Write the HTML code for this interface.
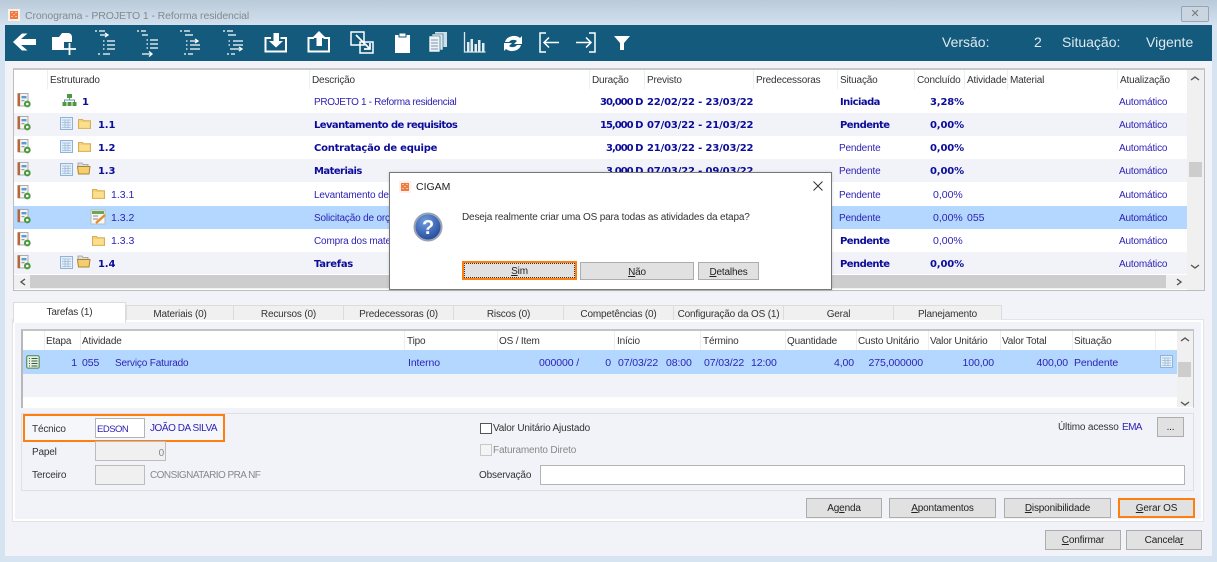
<!DOCTYPE html>
<html lang="pt-BR">
<head>
<meta charset="utf-8">
<title>Cronograma</title>
<style>
html,body{margin:0;padding:0;width:1217px;height:562px;overflow:hidden;background:#d6e4f2}
*{box-sizing:border-box}
body{font-family:"Liberation Sans",sans-serif;font-size:10px;letter-spacing:-.17px;color:#222;position:relative}
div{position:absolute}
.t{position:absolute;white-space:nowrap;line-height:14px;height:14px;margin-top:2px}
.h{color:#333;top:72px}
.s{position:absolute;width:1px;background:#eceef2}
.b{color:#0c0c9a;font-family:"DejaVu Sans",sans-serif;font-weight:bold;font-size:10px;letter-spacing:-.15px;margin-top:2px}
.lw{letter-spacing:-.55px}
.dur{letter-spacing:-1px}
.n{color:#2b1fb4}
.w{font-size:10.5px;letter-spacing:0;margin-top:1px}
.r{text-align:right}
.row{left:14px;width:1173px;height:23.2px}
.alt{background:#f1f3f9}
.sel{background:#b3d7ff}
.tab{top:305px;height:15px;background:#f0f0f0;border:1px solid #dcdcdc;border-bottom:0;text-align:center;line-height:17px;color:#333;white-space:nowrap}
.btn{background:#e1e1e1;border:1px solid #adadad;text-align:center;line-height:20px;color:#222;white-space:nowrap}
.inp{border:1px solid #b4b4b4;background:#fff}
.dis{background:#f0f0f0;border-color:#bcbcbc}
.lh{color:#333;top:333px}
.sm{top:355px;color:#2b1fb4;font-size:10.5px;letter-spacing:-.1px;margin-top:1px}
.hd{margin:0;font-size:14px;letter-spacing:0;color:#dfe9ef;height:16px;line-height:16px;top:34px}
svg{position:absolute;overflow:visible}
</style>
</head>
<body>
<svg width="0" height="0" style="position:absolute">
<defs>
<symbol id="book" viewBox="0 0 14 15"><rect x="1" y="0.5" width="10" height="12.5" fill="#f4f4f4" stroke="#9a9a9a" stroke-width=".8"/><rect x="0.5" y="0.5" width="2.6" height="12.5" fill="#b5673c"/><rect x="4.5" y="3" width="5" height="2.4" fill="#5b9bd5"/><rect x="4.5" y="7" width="3" height="1.2" fill="#9a9a9a"/><circle cx="10.3" cy="11" r="3.4" fill="#4d9a3e"/><circle cx="10.3" cy="11" r="1.3" fill="#fff"/></symbol>
<symbol id="tbl" viewBox="0 0 13 13"><rect x=".5" y=".5" width="12" height="12" fill="#e4eefa" stroke="#8fb2d8"/><path d="M2 3h9M2 5.500h9M2 8h9M2 10.500h9M5 3v8M8 3v8" stroke="#9dbad8" stroke-width=".8" fill="none"/></symbol>
<symbol id="fc" viewBox="0 0 13 11"><path d="M.5 1.500h4l1 1.200h7v8h-12z" fill="#f5d27a" stroke="#d9ad55"/><rect x="1.500" y="4" width="10" height="5.500" fill="#fbdf8e"/></symbol>
<symbol id="fo" viewBox="0 0 14 13"><path d="M1 1h4l1 1.400h5V6H1z" fill="#dcdcdc" stroke="#9a9a9a" stroke-width=".8"/><path d="M.5 4.500h12.500l-1 7.500H1.500z" fill="#f5cf6f" stroke="#a98630"/></symbol>
<symbol id="logo" viewBox="0 0 12 12"><rect width="12" height="12" fill="#fdf1ea"/><rect x="2" y="2" width="8" height="8" fill="#f07a40"/><path d="M3.500 3.500h1M7.500 3.500h1M5.500 5.500h1M3.500 7.500h1M7.500 7.500h1" stroke="#fff"/></symbol>
</defs>
</svg>

<!-- window chrome -->
<div style="left:0;top:0;width:1217px;height:25px;background:linear-gradient(#b9cad8,#d3e1ef)"></div>
<svg style="left:8px;top:9px" width="12" height="12"><use href="#logo" width="12" height="12"/></svg>
<span class="t" style="left:25px;top:8px;font-size:10.5px;letter-spacing:-.1px;color:#85898e;margin-top:1px">Cronograma - PROJETO 1 - Reforma residencial</span>
<div style="left:1181px;top:6px;width:28px;height:16px;background:#c9d5e0;border:1px solid #98a4af;border-radius:2px;color:#777;text-align:center;line-height:14px;font-size:11px">✕</div>

<div style="left:5px;top:25px;width:1207px;height:36px;background:#135a7c"></div>
<div style="left:5px;top:61px;width:1207px;height:495px;background:#f1f3f9"></div>

<!-- toolbar icons -->
<svg style="left:0;top:25px" width="640" height="36" viewBox="0 0 640 36">
<path d="M13 17 L22 8.500 H27.500 L21 14 H36 V20 H21 L27.500 25.500 H22Z" fill="#fff"/>
<path d="M52 12H59L62 8H68a4 4 0 0 1 4 4V17H64V25H52Z" fill="#fff"/>
<path d="M63.500 24H76M69.500 18V30" stroke="#fff" stroke-width="1.800" fill="none"/>
<g fill="none" stroke="#fff" stroke-width="1.300">
<path d="M95 6h2M99 6h6"/><path d="M100 10h7m-2-2 3 2-3 2"/><path d="M107 16h8M107 20h8M107 24h8M103 16h1.500M103 20h1.500M103 24h1.500M98 29h2M103 29h7"/>
<path d="M137 6h2M141 6h5M142 10h6M150 15h8M150 19h8M150 23h8M146.500 15h1.500M146.500 19h1.500M146.500 23h1.500"/><path d="M142 29h9m-2-2.500 3 2.500-3 2.500"/>
<path d="M180 6h2M184 6h6M185 10h8"/><path d="M190 16h7m-2-2 3 2-3 2"/><path d="M190 20h10M190 24h10M186 16h1.500M186 20h1.500M186 24h1.500M184 29h2M188 29h5"/>
<path d="M223 6h2M227 6h6M228 10h8M233 16h10M233 20h10M228.500 16h1.500M228.500 20h1.500"/><path d="M230 24h11m-2-2 3 2-3 2"/><path d="M227 29h2M231 29h4"/>
</g>
<path d="M271 13h-5.500v13.500h20.500V13h-5.500" fill="none" stroke="#fff" stroke-width="2"/><path d="M273.500 8h5.500v8h4l-7 6.500-7-6.500h4.500z" fill="#fff"/>
<path d="M314 13h-5.500v13.500h20.500V13h-5.500" fill="none" stroke="#fff" stroke-width="2"/><path d="M316.500 21h5.500v-8h4l-7-7-7 7h4.500z" fill="#fff"/>
<path d="M351 7h13v13h-13zM360 17h13v11h-13z" fill="none" stroke="#fff" stroke-width="1.500"/><path d="M356 10l14 14m0-6v6h-6" fill="none" stroke="#fff" stroke-width="1.700"/>
<path d="M395 10h15v18h-15z" fill="#fff"/><rect x="399" y="8" width="7" height="4" fill="#fff" stroke="#135a7c"/>
<g transform="translate(0,-4)"><path d="M435 11h12v15h-12z" fill="#cfdde6"/><path d="M432 13h11v16h-11z" fill="#dfe8ee" stroke="#135a7c" stroke-width=".6"/><path d="M429 15h11v16h-11z" fill="#eef3f6" stroke="#135a7c" stroke-width=".6"/><path d="M431 19h7M431 22h7M431 25h7M431 28h7" stroke="#7b97a8"/></g>
<path d="M464.500 7v20h21" fill="none" stroke="#dfe8ee" stroke-width="1.300"/><path d="M467 17h2.500v10H467zM470.500 14h2.500v13h-2.500zM474.500 19h2.500v8h-2.500zM478 15h2.500v12H478zM482 18h2.500v9H482z" fill="#e4ecf1"/>
<g transform="translate(0,1)"><path d="M505 16a9 7.500 0 0 1 15-4l2-2v8h-8l3-3a5 4 0 0 0-8 1zM521 19a9 7.500 0 0 1-15 4l-2 2v-8h8l-3 3a5 4 0 0 0 8-1z" fill="#fff"/></g>
<path d="M546 8h-6v19h6M559 17.500h-15m5-5-5 5 5 5" fill="none" stroke="#fff" stroke-width="1.500"/>
<path d="M589 8h6v19h-6M576 17.500h15m-5-5 5 5-5 5" fill="none" stroke="#fff" stroke-width="1.500"/>
<path d="M614 11h16l-6 7v7h-4v-7z" fill="#fff"/>
</svg>
<span class="t hd" style="left:942px">Versão:</span>
<span class="t hd" style="left:1034px">2</span>
<span class="t hd" style="left:1062px">Situação:</span>
<span class="t hd" style="left:1146px">Vigente</span>

<!-- upper grid -->
<div style="left:13px;top:68px;width:1192px;height:223px;background:#fff;border:1px solid #bdbdbd;border-top:2px solid #c8c8c8"></div>
<div class="row alt" style="top:112.500px"></div>
<div class="row alt" style="top:159px"></div>
<div class="row sel" style="top:205.500px"></div>
<div class="row alt" style="top:252px;height:22px"></div>
<div class="s" style="left:47px;top:70px;height:19px"></div><div class="s" style="left:309px;top:70px;height:19px"></div><div class="s" style="left:589px;top:70px;height:19px"></div><div class="s" style="left:644px;top:70px;height:19px"></div><div class="s" style="left:753px;top:70px;height:19px"></div><div class="s" style="left:837px;top:70px;height:19px"></div><div class="s" style="left:914px;top:70px;height:19px"></div><div class="s" style="left:964px;top:70px;height:19px"></div><div class="s" style="left:1007px;top:70px;height:19px"></div><div class="s" style="left:1117px;top:70px;height:19px"></div>
<span class="t h" style="left:50px">Estruturado</span><span class="t h" style="left:312px">Descrição</span><span class="t h" style="left:592px">Duração</span><span class="t h" style="left:647px">Previsto</span><span class="t h" style="left:756px">Predecessoras</span><span class="t h" style="left:840px">Situação</span><span class="t h" style="left:917px">Concluído</span><span class="t h" style="left:967px">Atividade</span><span class="t h" style="left:1010px">Material</span><span class="t h" style="left:1120px">Atualização</span>

<svg style="left:0;top:0" width="120" height="290">
<use href="#book" x="17" y="93" width="14" height="15"/><use href="#book" x="17" y="116" width="14" height="15"/><use href="#book" x="17" y="139" width="14" height="15"/><use href="#book" x="17" y="162" width="14" height="15"/><use href="#book" x="17" y="185" width="14" height="15"/><use href="#book" x="17" y="209" width="14" height="15"/><use href="#book" x="17" y="232" width="14" height="15"/><use href="#book" x="17" y="255" width="14" height="15"/>
<path d="M67 94h5v4h-5zM62.500 102h4v4h-4zM67.500 102h4v4h-4zM72.500 102h4v4h-4z" fill="#4d9a3e"/><path d="M69.500 98v2M64.500 102v-2h10v2" stroke="#6a8fb0" fill="none"/>
<use href="#tbl" x="60" y="117" width="13" height="13"/><use href="#fc" x="78" y="118" width="13" height="11"/>
<use href="#tbl" x="60" y="140" width="13" height="13"/><use href="#fc" x="78" y="141" width="13" height="11"/>
<use href="#tbl" x="60" y="163" width="13" height="13"/><use href="#fo" x="77" y="162" width="14" height="13"/>
<use href="#fc" x="92" y="188" width="13" height="11"/>
<rect x="91" y="210" width="14" height="14" fill="#f7f7f7" stroke="#bbb"/><rect x="92" y="211" width="12" height="3" fill="#6aa84f"/><path d="M93 216h5M93 219h5" stroke="#888"/><path d="M96 223l9-8" stroke="#e08a28" stroke-width="2.200"/>
<use href="#fc" x="92" y="235" width="13" height="11"/>
<use href="#tbl" x="60" y="256" width="13" height="13"/><use href="#fo" x="77" y="255" width="14" height="13"/>
</svg>

<!-- row 1 -->
<span class="t b" style="left:82px;top:94px">1</span>
<span class="t n" style="left:314px;top:94px;letter-spacing:-.35px">PROJETO 1 - Reforma residencial</span>
<span class="t b dur" style="left:600px;top:94px">30,000 D</span><span class="t b" style="left:647px;top:94px">22/02/22 - 23/03/22</span>
<span class="t b lw" style="left:840px;top:94px">Iniciada</span><span class="t b" style="left:930px;top:94px">3,28%</span><span class="t n" style="left:1119px;top:94px">Automático</span>
<!-- row 2 -->
<span class="t b" style="left:98px;top:117px">1.1</span>
<span class="t b" style="left:314px;top:117px;letter-spacing:-.58px">Levantamento de requisitos</span>
<span class="t b dur" style="left:600px;top:117px">15,000 D</span><span class="t b" style="left:647px;top:117px">07/03/22 - 21/03/22</span>
<span class="t b lw" style="left:840px;top:117px">Pendente</span><span class="t b" style="left:930px;top:117px">0,00%</span><span class="t n" style="left:1119px;top:117px">Automático</span>
<!-- row 3 -->
<span class="t b" style="left:98px;top:140px">1.2</span>
<span class="t b" style="left:314px;top:140px;letter-spacing:-.24px">Contratação de equipe</span>
<span class="t b dur" style="left:606px;top:140px">3,000 D</span><span class="t b" style="left:647px;top:140px">21/03/22 - 23/03/22</span>
<span class="t n" style="left:839px;top:140px">Pendente</span><span class="t b" style="left:930px;top:140px">0,00%</span><span class="t n" style="left:1119px;top:140px">Automático</span>
<!-- row 4 -->
<span class="t b" style="left:98px;top:163px">1.3</span>
<span class="t b lw" style="left:314px;top:163px">Materiais</span>
<span class="t b dur" style="left:606px;top:163px">3,000 D</span><span class="t b" style="left:647px;top:163px">07/03/22 - 09/03/22</span>
<span class="t n" style="left:839px;top:163px">Pendente</span><span class="t b" style="left:930px;top:163px">0,00%</span><span class="t n" style="left:1119px;top:163px">Automático</span>
<!-- row 5 -->
<span class="t n w" style="left:111px;top:187px">1.3.1</span>
<span class="t n" style="left:314px;top:187px">Levantamento de</span>
<span class="t n" style="left:839px;top:187px">Pendente</span><span class="t n w" style="left:933px;top:187px">0,00%</span><span class="t n" style="left:1119px;top:187px">Automático</span>
<!-- row 6 -->
<span class="t n w" style="left:111px;top:210px">1.3.2</span>
<span class="t n" style="left:314px;top:210px">Solicitação de orç</span>
<span class="t n" style="left:839px;top:210px">Pendente</span><span class="t n w" style="left:933px;top:210px">0,00%</span><span class="t n w" style="left:967px;top:210px">055</span><span class="t n" style="left:1119px;top:210px">Automático</span>
<!-- row 7 -->
<span class="t n w" style="left:111px;top:233px">1.3.3</span>
<span class="t n" style="left:314px;top:233px">Compra dos mate</span>
<span class="t b lw" style="left:840px;top:233px">Pendente</span><span class="t n w" style="left:933px;top:233px">0,00%</span><span class="t n" style="left:1119px;top:233px">Automático</span>
<!-- row 8 -->
<span class="t b" style="left:98px;top:256px">1.4</span>
<span class="t b" style="left:314px;top:256px;letter-spacing:-.3px">Tarefas</span>
<span class="t b lw" style="left:840px;top:256px">Pendente</span><span class="t b" style="left:930px;top:256px">0,00%</span><span class="t n" style="left:1119px;top:256px">Automático</span>

<!-- upper scrollbars -->
<div style="left:1187px;top:70px;width:17px;height:220px;background:#f0f0f0"></div>
<div style="left:1189px;top:162px;width:13px;height:15px;background:#cdcdcd"></div>
<div style="left:14px;top:275px;width:1173px;height:14px;background:#f0f0f0"></div>
<div style="left:30px;top:275px;width:1136px;height:13px;background:#cdcdcd"></div>
<svg style="left:0;top:0" width="1217" height="300">
<path d="M1191 80l4-3 4 3M1191 265l4 3 4-3M25 279l-4 3 4 3M1177 279l4 3-4 3" fill="none" stroke="#555" stroke-width="1.400"/>
</svg>

<!-- tabs -->
<div style="left:13px;top:320px;width:1190px;height:201px;background:#f1f3f9;border:2px solid #fff;box-shadow:0 0 0 1px #e4e4e8"></div>
<div class="tab" style="left:126px;width:108px">Materiais (0)</div>
<div class="tab" style="left:233px;width:111px">Recursos (0)</div>
<div class="tab" style="left:343px;width:111px">Predecessoras (0)</div>
<div class="tab" style="left:453px;width:111px">Riscos (0)</div>
<div class="tab" style="left:563px;width:111px">Competências (0)</div>
<div class="tab" style="left:673px;width:111px">Configuração da OS (1)</div>
<div class="tab" style="left:783px;width:111px">Geral</div>
<div class="tab" style="left:893px;width:109px">Planejamento</div>
<div style="left:13px;top:302px;width:113px;height:21px;background:#fff;border:1px solid #dcdcdc;border-bottom:0;text-align:center;line-height:19px;color:#333">Tarefas (1)</div>

<!-- lower grid -->
<div style="left:21px;top:329px;width:1173px;height:79px;background:#fff;border-left:2px solid #b8b8b8;border-top:2px solid #c4c4c4;border-right:1px solid #c4c4c4"></div>
<div style="left:23px;top:350px;width:1154px;height:23.500px;background:#b3d7ff"></div>
<div style="left:23px;top:373.500px;width:1154px;height:23px;background:#f1f3f9"></div>
<div class="s" style="left:44px;top:331px;height:19px"></div><div class="s" style="left:80px;top:331px;height:19px"></div><div class="s" style="left:404px;top:331px;height:19px"></div><div class="s" style="left:497px;top:331px;height:19px"></div><div class="s" style="left:614px;top:331px;height:19px"></div><div class="s" style="left:700px;top:331px;height:19px"></div><div class="s" style="left:785px;top:331px;height:19px"></div><div class="s" style="left:856px;top:331px;height:19px"></div><div class="s" style="left:928px;top:331px;height:19px"></div><div class="s" style="left:1000px;top:331px;height:19px"></div><div class="s" style="left:1072px;top:331px;height:19px"></div><div class="s" style="left:1155px;top:331px;height:19px"></div>
<span class="t lh" style="left:46px">Etapa</span><span class="t lh" style="left:82px">Atividade</span><span class="t lh" style="left:407px">Tipo</span><span class="t lh" style="left:499px">OS / Item</span><span class="t lh" style="left:617px">Início</span><span class="t lh" style="left:703px">Término</span><span class="t lh" style="left:787px">Quantidade</span><span class="t lh" style="left:858px">Custo Unitário</span><span class="t lh" style="left:930px">Valor Unitário</span><span class="t lh" style="left:1002px">Valor Total</span><span class="t lh" style="left:1074px">Situação</span>
<svg style="left:26px;top:355px" width="14" height="14"><rect x=".7" y=".7" width="12.500" height="12.500" rx="1.500" fill="#e6f0e4" stroke="#5d8f63" stroke-width="1.200"/><path d="M3 3.500h1M5.500 3.500h6M3 6h1M5.500 6h6M3 8.500h1M5.500 8.500h6M3 11h1M5.500 11h6" stroke="#35603c"/></svg>
<span class="t sm r" style="left:60px;width:17px">1</span><span class="t sm" style="left:82px">055</span><span class="t sm" style="left:115px;font-size:10px;letter-spacing:-.17px;margin-top:2px">Serviço Faturado</span><span class="t sm" style="left:408px">Interno</span><span class="t sm" style="left:539px">000000 /</span><span class="t sm r" style="left:600px;width:11px">0</span><span class="t sm" style="left:618px">07/03/22</span><span class="t sm" style="left:666px">08:00</span><span class="t sm" style="left:704px">07/03/22</span><span class="t sm" style="left:751px">12:00</span><span class="t sm r" style="left:820px;width:34px">4,00</span><span class="t sm r" style="left:860px;width:63px">275,000000</span><span class="t sm r" style="left:950px;width:44px">100,00</span><span class="t sm r" style="left:1020px;width:48px">400,00</span><span class="t sm" style="left:1074px">Pendente</span>
<svg style="left:1160px;top:355px" width="13" height="13"><use href="#tbl" width="13" height="13"/></svg>
<div style="left:1177px;top:331px;width:16px;height:76px;background:#f0f0f0"></div>
<div style="left:1178px;top:362px;width:13px;height:15px;background:#cdcdcd"></div>
<svg style="left:0;top:0" width="1217" height="420"><path d="M1181 341l4-3 4 3M1181 402l4 3 4-3" fill="none" stroke="#555" stroke-width="1.400"/></svg>

<!-- fields -->
<div style="left:21px;top:413px;width:1173px;height:78px;border:1px solid #e0e0e4"></div>
<div style="left:23px;top:414px;width:202px;height:28px;border:2px solid #ff7f0e;background:#f6f7fb"></div>
<span class="t" style="left:32px;top:421px;color:#333">Técnico</span>
<div class="inp" style="left:95px;top:418px;width:50px;height:20px"></div>
<span class="t n" style="left:97px;top:421px;font-size:9.5px;letter-spacing:-.5px">EDSON</span>
<span class="t n" style="left:150px;top:420px;letter-spacing:-.45px">JOÃO DA SILVA</span>
<span class="t" style="left:32px;top:444px;color:#333">Papel</span>
<div class="inp dis" style="left:95px;top:441px;width:71px;height:20px"></div>
<span class="t r" style="left:150px;top:445px;width:14px;color:#888">0</span>
<span class="t" style="left:32px;top:467px;color:#333">Terceiro</span>
<div class="inp dis" style="left:95px;top:465px;width:50px;height:20px"></div>
<span class="t" style="left:150px;top:467px;color:#888;letter-spacing:-.55px">CONSIGNATARIO PRA NF</span>

<div style="left:480px;top:423px;width:12px;height:11px;background:#fff;border:1px solid #555"></div>
<span class="t" style="left:493px;top:420px;color:#333">Valor Unitário Ajustado</span>
<div style="left:480px;top:444px;width:12px;height:12px;background:#f4f4f4;border:1px solid #c8c8c8"></div>
<span class="t" style="left:493px;top:442px;color:#888">Faturamento Direto</span>
<span class="t" style="left:479px;top:467px;color:#333">Observação</span>
<div class="inp" style="left:540px;top:465px;width:645px;height:20px"></div>
<span class="t" style="left:1058px;top:419px;color:#333">Último acesso</span>
<span class="t n" style="left:1122px;top:419px;letter-spacing:-.6px">EMA</span>
<div class="btn" style="left:1157px;top:417px;width:27px;height:20px;line-height:20px">...</div>

<!-- buttons -->
<div class="btn" style="left:806px;top:498px;width:76px;height:20px"><span>Ag<u>e</u>nda</span></div>
<div class="btn" style="left:889px;top:498px;width:107px;height:20px"><u>A</u>pontamentos</div>
<div class="btn" style="left:1004px;top:498px;width:107px;height:20px"><u>D</u>isponibilidade</div>
<div class="btn" style="left:1118px;top:498px;width:77px;height:20px;border:2px solid #ff7f0e;line-height:18px"><u>G</u>erar OS</div>
<div class="btn" style="left:1045px;top:530px;width:76px;height:20px"><u>C</u>onfirmar</div>
<div class="btn" style="left:1126px;top:530px;width:76px;height:20px">Cancela<u>r</u></div>

<!-- dialog -->
<div style="left:389px;top:172px;width:443px;height:118px;background:#fff;border:1px solid #777;box-shadow:0 0 3px rgba(0,0,0,.15)"></div>
<svg style="left:399px;top:181px" width="12" height="12"><use href="#logo" width="12" height="12"/></svg>
<span class="t" style="left:416px;top:179px;font-size:10.5px;letter-spacing:0;color:#222;margin-top:1px">CIGAM</span>
<svg style="left:812px;top:180px" width="12" height="12"><path d="M1.500 1.500l9 9M10.500 1.500l-9 9" stroke="#333" stroke-width="1"/></svg>
<svg style="left:413px;top:212px" width="30" height="30"><defs><radialGradient id="q" cx=".4" cy=".3" r=".8"><stop offset="0" stop-color="#6f9de0"/><stop offset="1" stop-color="#1a3f92"/></radialGradient></defs><circle cx="15" cy="15" r="13.500" fill="url(#q)" stroke="#9aa3b3" stroke-width="2"/><text x="15" y="22" text-anchor="middle" font-family="Liberation Sans" font-weight="bold" font-size="20" fill="#fff">?</text></svg>
<span class="t" style="left:462px;top:209px;color:#333">Deseja realmente criar uma OS para todas as atividades da etapa?</span>
<div class="btn" style="left:462px;top:261px;width:115px;height:19px;border:2px solid #ff7f0e;line-height:18px;outline:1px dotted #333;outline-offset:-3px"><u>S</u>im</div>
<div class="btn" style="left:580px;top:262px;width:114px;height:18px;line-height:19px"><u>N</u>ão</div>
<div class="btn" style="left:698px;top:262px;width:61px;height:18px;line-height:19px"><u>D</u>etalhes</div>
</body>
</html>
